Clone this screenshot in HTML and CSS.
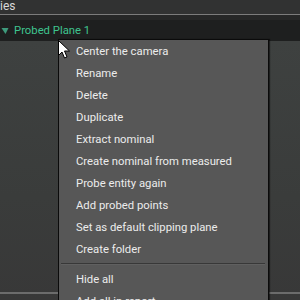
FILE: index.html
```html
<!DOCTYPE html>
<html>
<head>
    <meta charset="UTF-8">
    <link rel="stylesheet" href="styles.css">
</head>
<body>
<div class="app">
    <div class="title">ies</div>
    <div class="rule"></div>
    <div class="strip"></div>
    <div class="row">
        <svg class="caret" width="8" height="8" viewBox="0 0 8 8"><polygon points="0.5,1 7.5,1 4.5,7" fill="#3e9a7c"/></svg>
        <span class="name">Probed Plane 1</span>
    </div>
    <div class="panel">
        <div class="fill"></div>
        <div class="foot"></div>
    </div>
</div>

<div class="menu">
    <p class="item">Center the camera</p>
    <p class="item">Rename</p>
    <p class="item">Delete</p>
    <p class="item">Duplicate</p>
    <p class="item">Extract nominal</p>
    <p class="item">Create nominal from measured</p>
    <p class="item">Probe entity again</p>
    <p class="item">Add probed points</p>
    <p class="item">Set as default clipping plane</p>
    <p class="item">Create folder</p>
    <p class="sep"></p>
    <p class="item">Hide all</p>
    <p class="item">Add all in report</p>
</div>

<svg class="cursor" width="13" height="20" viewBox="0 0 13 20">
    <path d="M0.5 0.5 L0.5 15.5 L4 12 L6.5 18 L9 17 L6.5 11 L11.5 11 Z" fill="#fff" stroke="#000" stroke-width="1"/>
</svg>
</body>
</html>
```

FILE: styles.css
```css
body,p,div,span{margin: 0;padding: 0;}
body{width: 300px;height: 300px;overflow: hidden;background: #3b3d3c;font-family: Roboto, "Liberation Sans", sans-serif;}
.app{display: flex;flex-direction: column;height: 300px;}
.title{height: 14px;line-height: 13px;background: #313232;color: #d8d8d8;font-size: 12px;}
.rule{height: 1px;background: #7c7c7c;}
.strip{height: 5px;background: #262727;}
.row{display: flex;align-items: center;height: 21px;background: #1e1f1f;gap: 5px;padding-left: 1px;}
.name{color: #3ec48f;font-size: 11.3px;}
.panel{flex: 1;display: flex;flex-direction: column;background: linear-gradient(#3e4140, #3a3c3b 60%, #383838);}
.fill{flex: 1;}
.foot{height: 2px;background: #6c6c6c;margin-bottom: 6px;}

.menu{
    position: absolute;left: 58px;top: 39px;width: 209px;padding-top: 1px;
    background: #575757;border: 1px solid #0b0b0b;
    box-shadow: 1px 0 1px rgba(0,0,0,0.5);
    font-size: 11.3px;color: #ececec;
}
.item{height: 22px;line-height: 22px;padding-left: 17px;white-space: nowrap;}
.sep{height: 1px;background: #383838;border-bottom: 1px solid #606060;margin: 2px 3px 4px 2px;}
.cursor{position: absolute;left: 58px;top: 40px;}
```
